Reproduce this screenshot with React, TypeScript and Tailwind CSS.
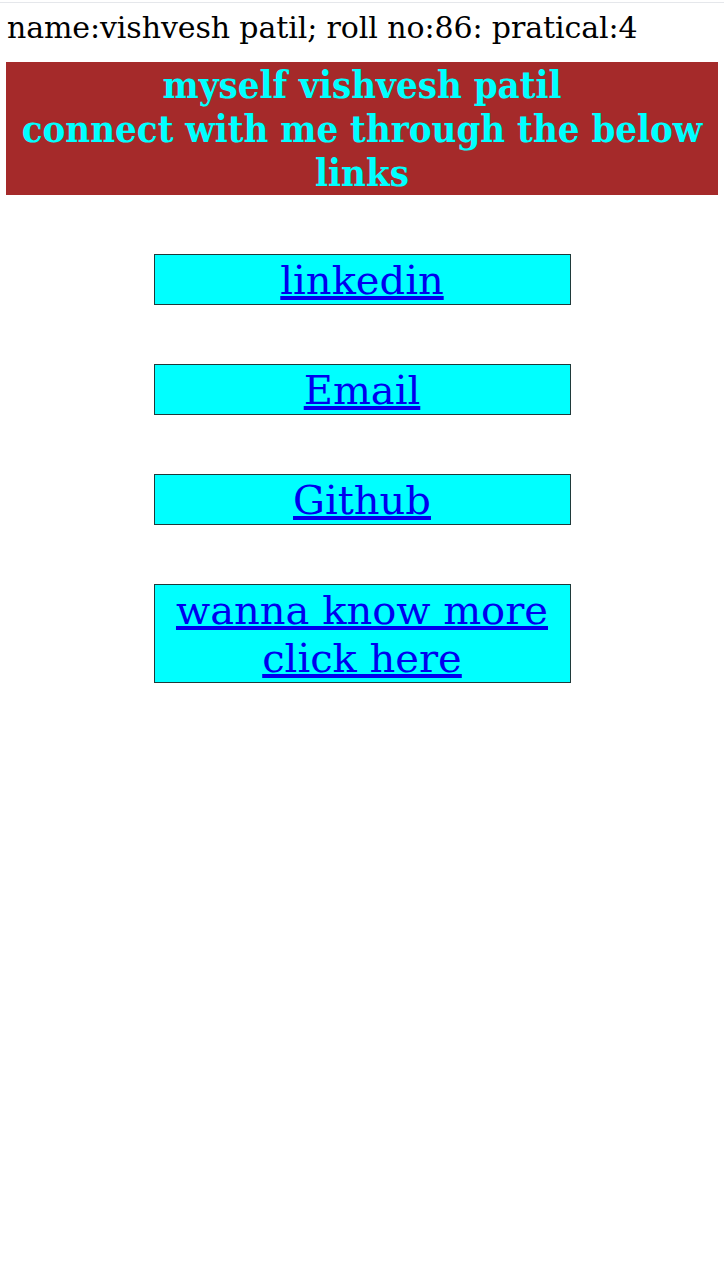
export default function App() {
  const serif = { fontFamily: '"DejaVu Serif", "Liberation Serif", serif' };
  const links = ["linkedin", "Email", "Github"];
  return (
    <div className="min-h-[1280px] bg-white" style={serif}>
      <div className="h-[3px] border-b border-gray-200" />
      <p className="text-[30px] leading-[44px] text-black pl-[7px] pt-[3px] tracking-[-0.1px] whitespace-nowrap">
        name:vishvesh patil; roll no:86: pratical:4
      </p>
      <div className="mx-[6px] mt-[12px] bg-[#a52a2a] h-[133px] flex flex-col items-center justify-center">
        <h1
          className="text-[38px] leading-[44px] font-bold text-[#00ffff] text-center whitespace-nowrap"
          style={{ fontFamily: '"DejaVu Serif Condensed", "DejaVu Serif", serif', fontStretch: "condensed" }}
        >
          myself vishvesh patil
          <br />
          connect with me through the below
          <br />
          links
        </h1>
      </div>
      <div className="flex flex-col items-center gap-[59px] mt-[59px]">
        {links.map((l) => (
          <div key={l} className="w-[417px] h-[51px] bg-[#00ffff] border border-[#1f3a3a] flex items-center justify-center">
            <a href="#" className="text-[40px] leading-[46px] text-[#0000ee] underline">
              {l}
            </a>
          </div>
        ))}
        <div className="w-[417px] h-[99px] bg-[#00ffff] border border-[#1f3a3a] flex items-center justify-center text-center">
          <a href="#" className="text-[40px] leading-[48px] text-[#0000ee] underline">
            wanna know more
            <br />
            click here
          </a>
        </div>
      </div>
    </div>
  );
}
